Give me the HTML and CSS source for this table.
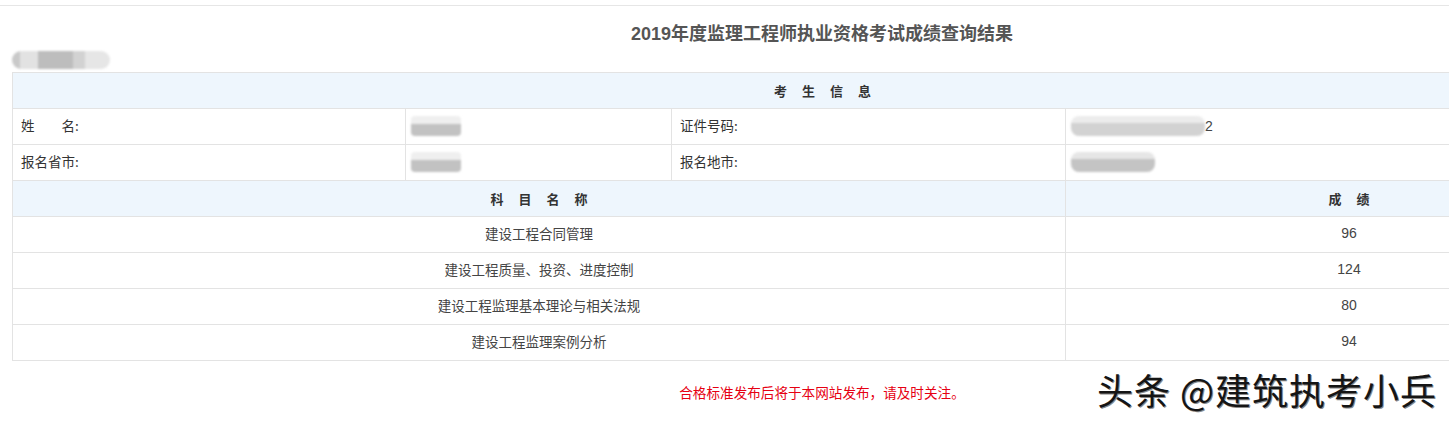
FILE: index.html
```html
<!DOCTYPE html>
<html lang="zh-CN">
<head>
<meta charset="utf-8">
<title>成绩查询结果</title>
<link rel="stylesheet" href="styles.css">
</head>
<body>
<div class="topline"></div>
<div class="page">
  <div class="inner">
    <h1 class="title">2019年度监理工程师执业资格考试成绩查询结果</h1>
    <div class="userline"><span class="blur blur-user"></span></div>
    <table class="grid">
      <colgroup>
        <col class="c1"><col class="c2"><col class="c3"><col class="c4">
      </colgroup>
      <tr class="head">
        <td colspan="4"><span class="spaced"><span>考</span><span>生</span><span>信</span><span>息</span></span></td>
      </tr>
      <tr>
        <td class="label">姓&emsp;&emsp;名:</td>
        <td class="val"><span class="blur blur-a"></span></td>
        <td class="label">证件号码:</td>
        <td class="val"><span class="blur blur-id"></span><span class="idend">2</span></td>
      </tr>
      <tr>
        <td class="label">报名省市:</td>
        <td class="val"><span class="blur blur-a"></span></td>
        <td class="label">报名地市:</td>
        <td class="val"><span class="blur blur-city"></span></td>
      </tr>
      <tr class="head">
        <td colspan="3"><span class="spaced"><span>科</span><span>目</span><span>名</span><span>称</span></span></td>
        <td><span class="spaced"><span>成</span><span>绩</span></span></td>
      </tr>
      <tr class="score"><td colspan="3">建设工程合同管理</td><td>96</td></tr>
      <tr class="score"><td colspan="3">建设工程质量、投资、进度控制</td><td>124</td></tr>
      <tr class="score"><td colspan="3">建设工程监理基本理论与相关法规</td><td>80</td></tr>
      <tr class="score"><td colspan="3">建设工程监理案例分析</td><td>94</td></tr>
    </table>
    <p class="notice">合格标准发布后将于本网站发布，请及时关注。</p>
  </div>
</div>
<div class="watermark">头条 @建筑执考小兵</div>
</body>
</html>
```
FILE: styles.css
```css
html, body {
  margin: 0;
  padding: 0;
  background: #fff;
  overflow: hidden;
  font-family: "Noto Sans CJK SC", "Liberation Sans", sans-serif;
  color: #333;
}
.topline {
  height: 5px;
  border-bottom: 1px solid #e6e6e6;
}
.page {
  width: 100%;
  overflow: hidden;
}
.inner {
  width: 1620px;
  padding-left: 12px;
}
.title {
  margin: 0;
  padding-top: 15px;
  height: 27px;
  line-height: 27px;
  text-align: center;
  font-size: 18px;
  font-weight: bold;
  color: #555;
  font-family: "Liberation Sans", "Noto Sans CJK SC", sans-serif;
}
.userline {
  height: 24px;
  display: flex;
  align-items: center;
}
.blur {
  display: inline-block;
  border-radius: 6px;
  filter: blur(1.2px);
  vertical-align: middle;
}
.blur-user {
  width: 98px;
  height: 18px;
  background: linear-gradient(90deg, #c9c9c9 0 8%, #e2e2e2 8% 27%, #bdbdbd 27% 62%, #d2d2d2 62% 75%, #e6e6e6 75% 100%);
  border-radius: 9px;
}
.blur-a {
  width: 50px;
  height: 20px;
  background: linear-gradient(180deg, #efefef 0 40%, #c2c2c2 40% 100%);
  border-radius: 4px;
}
.blur-id {
  width: 134px;
  height: 20px;
  background: linear-gradient(180deg, #ececec 0 35%, #d2d2d2 35% 100%);
  border-radius: 8px;
}
.blur-city {
  width: 84px;
  height: 20px;
  background: linear-gradient(180deg, #e6e6e6 0 35%, #c4c4c4 35% 100%);
  border-radius: 8px;
}
.idend {
  font-family: "Liberation Sans", sans-serif;
  font-size: 14px;
  color: #444;
  vertical-align: middle;
}
.grid {
  width: 1620px;
  table-layout: fixed;
  border-collapse: collapse;
  font-size: 13.5px;
}
.c1 { width: 393px; }
.c2 { width: 266px; }
.c3 { width: 394px; }
.c4 { width: 567px; }
.grid td {
  border: 1px solid #e3e3e3;
  height: 36px;
  padding: 0 0 3px 0;
  box-sizing: border-box;
}
.head td {
  background: #eef6fd;
  text-align: center;
  font-weight: bold;
  font-size: 13px;
  color: #333;
  padding-bottom: 1px;
}
.spaced {
  display: inline-flex;
  gap: 15px;
}
.label {
  padding-left: 8px !important;
  color: #333;
}
.val {
  padding-left: 5px !important;
}
.score td {
  text-align: center;
  color: #444;
}
.score td:last-child {
  font-family: "Liberation Sans", sans-serif;
  font-size: 14px;
}
.notice {
  margin: 0;
  padding-top: 22px;
  text-align: center;
  color: #e60012;
  font-size: 13.6px;
  line-height: 18px;
}
.watermark {
  position: absolute;
  left: 1097px;
  top: 366px;
  font-size: 36px;
  line-height: 46px;
  color: #151515;
  letter-spacing: 1px;
  text-shadow: 1px 1px 0 #888, -1px 0 0 #fff;
  font-family: "Noto Sans CJK SC", sans-serif;
}
```
